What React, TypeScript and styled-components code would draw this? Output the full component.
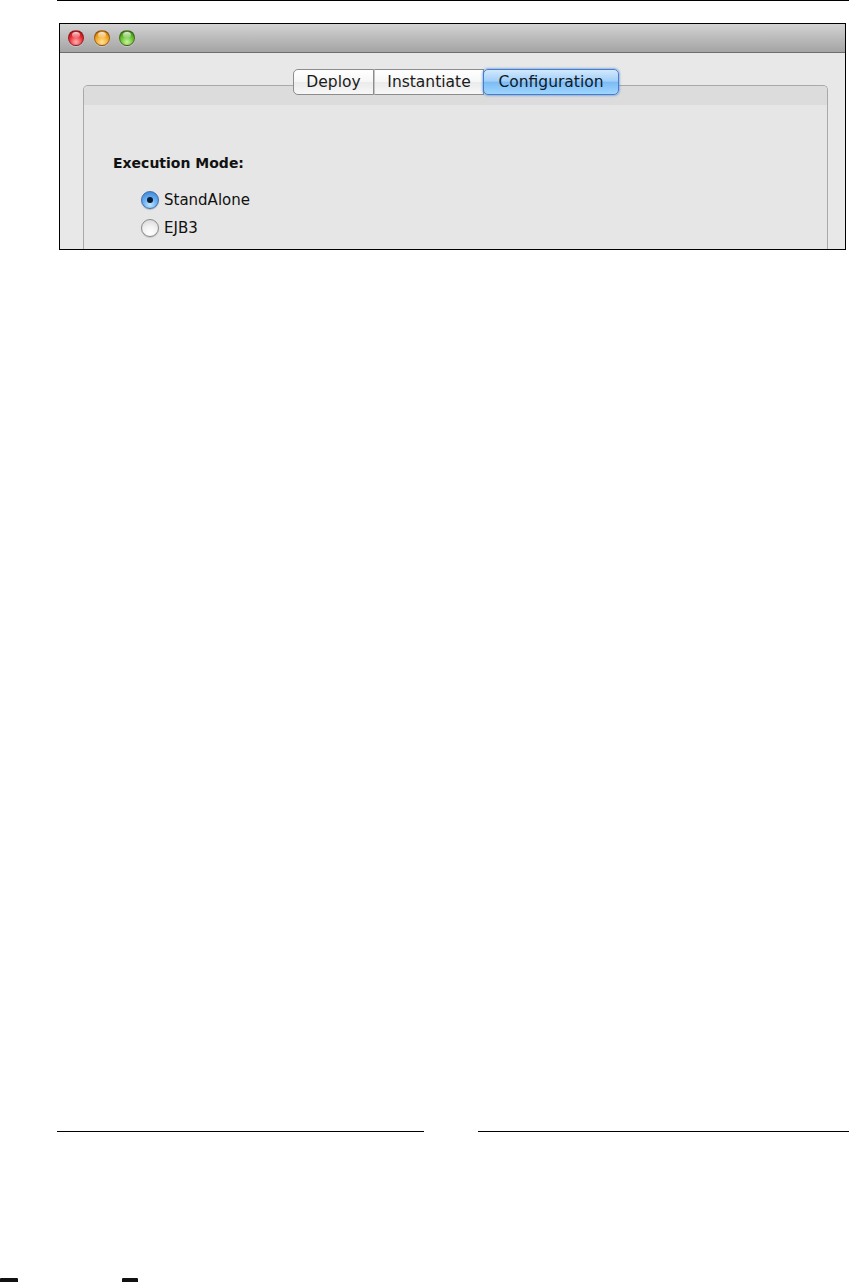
import React from "react";
import styled, { createGlobalStyle, css } from "styled-components";

const GlobalStyle = createGlobalStyle`
  html, body { margin: 0; padding: 0; background: #ffffff; }
  #root { width: 849px; }
`;

const Page = styled.div`
  width: 849px;
  height: 1282px;
  display: flex;
  flex-direction: column;
  overflow: hidden;
  background: #fff;
  font-family: "DejaVu Sans", "Liberation Sans", sans-serif;
`;

const TopRule = styled.div`
  height: 1px;
  margin-left: 57px;
  background: #000;
`;

const Figure = styled.div`
  margin: 22px 0 0 59px;
  width: 787px;
  height: 228px;
  box-sizing: border-box;
  border: 1px solid #000;
  display: flex;
  flex-direction: column;
  background: #e8e8e8;
  overflow: hidden;
`;

const TitleBar = styled.div`
  height: 28px;
  flex: none;
  display: flex;
  align-items: center;
  gap: 9.5px;
  padding-left: 8px;
  background: linear-gradient(#d3d3d3, #bdbdbd 45%, #a4a4a4);
  border-bottom: 1px solid #6e6e6e;
`;

const lightColors = {
  close: ["#ffb3b3", "#e8262e", "#9c0f16"],
  min: ["#ffe49a", "#f0a21c", "#b25f06"],
  max: ["#c9f59b", "#5cbb28", "#2d7410"],
} as const;

type LightKind = keyof typeof lightColors;

const Light = styled.span<{ $kind: LightKind }>`
  position: relative;
  width: 16px;
  height: 16px;
  border-radius: 50%;
  box-sizing: border-box;
  border: 1px solid rgba(60, 20, 20, 0.45);
  ${({ $kind }) => {
    const [hi, mid, lo] = lightColors[$kind];
    return css`
      background: radial-gradient(circle at 50% 78%, ${hi} 0%, ${mid} 55%, ${lo} 100%);
    `;
  }}
  box-shadow: 0 1px 0 rgba(255, 255, 255, 0.35);
  &::after {
    content: "";
    position: absolute;
    left: 3px;
    right: 3px;
    top: 1px;
    height: 6px;
    border-radius: 50%;
    background: linear-gradient(rgba(255, 255, 255, 0.85), rgba(255, 255, 255, 0.1));
  }
`;

const Content = styled.div`
  flex: 1;
  display: flex;
  padding: 32px 17px 0 23px;
`;

const TabBox = styled.div`
  position: relative;
  flex: 1;
  border: 1px solid #a9a9a9;
  border-bottom: none;
  border-radius: 5px 5px 0 0;
  background: #e6e6e6;
  display: flex;
  flex-direction: column;
`;

const TabStrip = styled.div`
  height: 19px;
  background: #dcdcdc;
  border-radius: 4px 4px 0 0;
`;

const Tabs = styled.div`
  position: absolute;
  top: -17px;
  left: 0;
  right: 0;
  display: flex;
  justify-content: center;
  padding-left: 1px;
`;

const Tab = styled.div<{ $selected?: boolean; $first?: boolean; $w: number }>`
  width: ${({ $w }) => $w}px;
  height: 26px;
  box-sizing: border-box;
  display: flex;
  align-items: center;
  justify-content: center;
  font-size: 15.5px;
  color: #1a1a1a;
  border: 1px solid #8c8c8c;
  border-left: 1px solid #c4c4c4;
  background: linear-gradient(#ffffff, #f6f6f6 50%, #ebebeb 52%, #f7f7f7);
  ${({ $first }) =>
    $first &&
    css`
      border-left: 1px solid #8c8c8c;
      border-radius: 5px 0 0 5px;
    `}
  ${({ $selected }) =>
    $selected &&
    css`
      border: 1px solid #4a7dc4;
      border-radius: 5px;
      background: linear-gradient(#d2e9fd, #a3d0f9 45%, #7cbcf5 52%, #9fd6ff);
      box-shadow: 0 0 2px 1px rgba(70, 140, 230, 0.55);
      color: #0f1a2a;
      position: relative;
      margin-left: -1px;
    `}
`;

const Body = styled.div`
  display: flex;
  flex-direction: column;
  padding: 50px 0 0 29px;
`;

const SectionLabel = styled.div`
  font-weight: bold;
  font-size: 14px;
  line-height: 17px;
  color: #111;
`;

const RadioList = styled.div`
  display: flex;
  flex-direction: column;
  padding: 14px 0 0 28px;
`;

const RadioRow = styled.label`
  display: flex;
  align-items: center;
  gap: 5px;
  height: 28px;
  font-size: 15px;
  color: #111;
`;

const RadioDot = styled.span<{ $checked?: boolean }>`
  position: relative;
  width: 18px;
  height: 18px;
  border-radius: 50%;
  box-sizing: border-box;
  flex: none;
  ${({ $checked }) =>
    $checked
      ? css`
          border: 1px solid #3e6fae;
          background: radial-gradient(circle at 50% 80%, #bfe6ff 0%, #6cb1f0 45%, #2f7bd6 100%);
          box-shadow: 0 1px 1px rgba(0, 0, 0, 0.2);
          &::after {
            content: "";
            position: absolute;
            left: 5px;
            top: 5px;
            width: 6px;
            height: 6px;
            border-radius: 50%;
            background: #0d1b2e;
          }
        `
      : css`
          border: 1px solid #8a8a8a;
          background: radial-gradient(circle at 50% 80%, #ffffff 0%, #f2f2f2 45%, #d2d2d2 100%);
          box-shadow: 0 1px 1px rgba(0, 0, 0, 0.15);
        `}
`;

const FooterRules = styled.div`
  margin-top: 881px;
  display: flex;
  align-items: center;
  height: 1px;
`;

const Rule = styled.div<{ $gap: number; $w: number }>`
  flex: none;
  height: 1px;
  background: #000;
  margin-left: ${({ $gap }) => $gap}px;
  width: ${({ $w }) => $w}px;
`;

const Fragments = styled.div`
  margin-top: 146px;
  display: flex;
  height: 4px;
`;

const Fragment = styled.div<{ $w: number; $gap: number }>`
  width: ${({ $w }) => $w}px;
  margin-left: ${({ $gap }) => $gap}px;
  height: 4px;
  background: #111;
  border-radius: 1px 1px 0 0;
`;

export default function App() {
  return (
    <>
      <GlobalStyle />
      <Page>
        <TopRule />
        <Figure>
          <TitleBar>
            <Light $kind="close" />
            <Light $kind="min" />
            <Light $kind="max" />
          </TitleBar>
          <Content>
            <TabBox>
              <TabStrip />
              <Tabs>
                <Tab $first $w={81}>Deploy</Tab>
                <Tab $w={110}>Instantiate</Tab>
                <Tab $selected $w={136}>Configuration</Tab>
              </Tabs>
              <Body>
                <SectionLabel>Execution Mode:</SectionLabel>
                <RadioList>
                  <RadioRow>
                    <RadioDot $checked />
                    StandAlone
                  </RadioRow>
                  <RadioRow>
                    <RadioDot />
                    EJB3
                  </RadioRow>
                </RadioList>
              </Body>
            </TabBox>
          </Content>
        </Figure>
        <FooterRules>
          <Rule $gap={57} $w={367} />
          <Rule $gap={54} $w={371} />
        </FooterRules>
        <Fragments>
          <Fragment $gap={0} $w={18} />
          <Fragment $gap={104} $w={16} />
        </Fragments>
      </Page>
    </>
  );
}
